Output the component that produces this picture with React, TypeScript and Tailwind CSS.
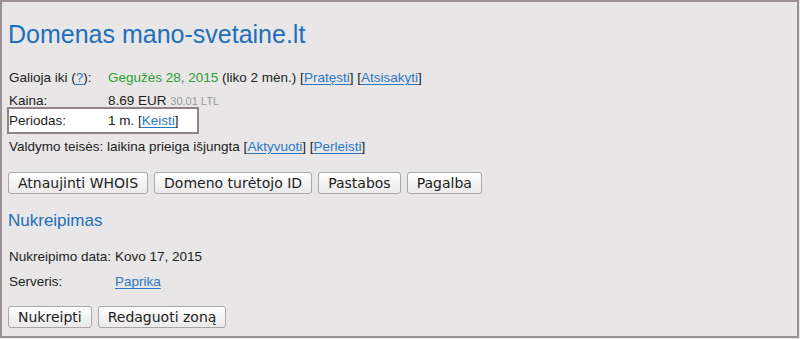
import React from 'react';

const Btn: React.FC<{ children: React.ReactNode }> = ({ children }) => (
  <button className="h-[22px] px-[9px] rounded-[3px] border border-[#a9a6a8] bg-gradient-to-b from-white to-[#ebe9ea] text-[14px] leading-none text-[#222] font-['DejaVu_Sans',sans-serif]">
    {children}
  </button>
);

const A: React.FC<{ children: React.ReactNode }> = ({ children }) => (
  <a href="#" className="text-[#2b78c5] underline underline-offset-[2px]">{children}</a>
);

const App: React.FC = () => {
  return (
    <div className="w-[800px] h-[339px] bg-[#e8e6e7] font-['Liberation_Sans',Arial,sans-serif] text-[#222] text-[13.5px]">
      <div className="h-[338px] w-[799px] border-2 border-[#9b9195] px-[5px] pt-[17px]">
        <h1 className="text-[25px] leading-[30px] text-[#1d6fbd] ml-[1px]">Domenas mano-svetaine.lt</h1>

        <div className="mt-[18px] flex flex-col">
          <div className="flex h-[22px] items-center pl-[2px]">
            <span className="w-[99px]">Galioja iki (<A>?</A>):</span>
            <span>
              <span className="text-[#2ba02f]">Gegužės 28, 2015</span> (liko 2 mėn.) [<A>Pratęsti</A>] [<A>Atsisakyti</A>]
            </span>
          </div>
          <div className="flex h-[24px] items-center pl-[2px]">
            <span className="w-[99px]">Kaina:</span>
            <span>
              8.69 EUR <span className="text-[11px] text-[#9a9a9a]">30.01 LTL</span>
            </span>
          </div>
          <div className="-mt-[6px] flex h-[27px] w-[192px] items-center pt-[2px] bg-white border-2 border-[#8f8589]">
            <span className="w-[99px]">Periodas:</span>
            <span>
              1 m. [<A>Keisti</A>]
            </span>
          </div>
          <div className="flex h-[26px] items-center pl-[2px]">
            <span>
              Valdymo teisės: laikina prieiga išjungta [<A>Aktyvuoti</A>] [<A>Perleisti</A>]
            </span>
          </div>
        </div>

        <div className="mt-[12px] flex gap-[6px] pl-[1px]">
          <Btn>Atnaujinti WHOIS</Btn>
          <Btn>Domeno turėtojo ID</Btn>
          <Btn>Pastabos</Btn>
          <Btn>Pagalba</Btn>
        </div>

        <h2 className="mt-[17px] text-[17px] leading-[20px] text-[#1d6fbd] ml-[1px]">Nukreipimas</h2>

        <div className="mt-[14px] flex flex-col pl-[2px]">
          <div className="flex h-[25px] items-center">
            <span className="w-[106px]">Nukreipimo data:</span>
            <span>Kovo 17, 2015</span>
          </div>
          <div className="flex h-[25px] items-center">
            <span className="w-[106px]">Serveris:</span>
            <A>Paprika</A>
          </div>
        </div>

        <div className="mt-[11px] flex gap-[6px] pl-[1px]">
          <Btn>Nukreipti</Btn>
          <Btn>Redaguoti zoną</Btn>
        </div>
      </div>
    </div>
  );
};

export default App;
